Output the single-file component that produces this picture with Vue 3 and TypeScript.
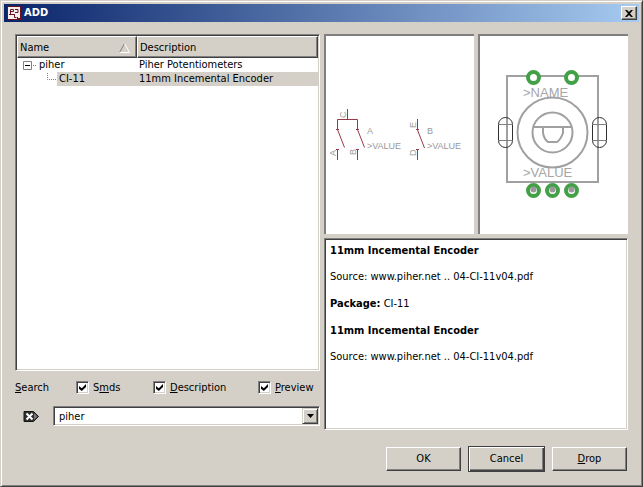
<script setup lang="ts">
import { ref } from 'vue'

interface TreeRow {
  name: string
  description: string
  child: boolean
}

interface Pin {
  label: string
  x: number
  y: number
}

interface Filter {
  before: string
  key: string
  after: string
  on: boolean
}

const rows: TreeRow[] = [
  { name: 'piher', description: 'Piher Potentiometers', child: false },
  { name: 'CI-11', description: '11mm Incemental Encoder', child: true },
]

const pins: Pin[] = [
  { label: 'A', x: 336, y: 156 },
  { label: 'B', x: 356, y: 155 },
  { label: 'C', x: 346, y: 118 },
  { label: 'D', x: 416, y: 156 },
  { label: 'E', x: 416, y: 128 },
]

const openPads: number[] = [533.5, 571.5]
const drilledPads: number[] = [533.5, 552.5, 571.5]
const holders: number[] = [498.5, 592.5]

const filters = ref<Filter[]>([
  { before: 'S', key: 'm', after: 'ds', on: true },
  { before: '', key: 'D', after: 'escription', on: true },
  { before: '', key: 'P', after: 'review', on: true },
])
const query = ref<string>('piher')
const selected = ref<string>('CI-11')
</script>

<template>
  <main class="dialog">
    <header class="titlebar">
      <svg class="logo" viewBox="0 0 14 14" aria-hidden="true">
        <rect width="14" height="14" fill="#6b1420" />
        <rect x="1" y="1" width="12" height="12" fill="#f6eeee" />
        <path d="M3.500 8V3.500H6.500V5.500H4M8 3.500h3v3H8M2 8.500h6M7.500 8.500v3h2" fill="none" stroke="#6b1420" />
        <path d="M10 11h4v3h-4z" fill="#6b1420" />
        <path d="M11 11.500h2" stroke="#f6eeee" />
      </svg>
      <h1>ADD</h1>
      <button class="close" type="button" aria-label="Close">
        <svg viewBox="0 0 8 7" aria-hidden="true"><path d="M0 0h2l2 2 2-2h2L5 3.500 8 7H6L4 5 2 7H0l3-3.500z" /></svg>
      </button>
    </header>

    <div class="content">
      <section class="browser">
        <div class="tree sunken">
          <table>
            <thead>
              <tr>
                <th class="name-col">
                  <span class="head">Name
                    <svg class="sort" viewBox="0 0 11 10" aria-hidden="true">
                      <path d="M5.500 .5L.5 9.500" stroke="#808080" />
                      <path d="M5.500 .5l5 9H.5" fill="none" stroke="#fff" />
                    </svg>
                  </span>
                </th>
                <th>Description</th>
              </tr>
            </thead>
            <tbody>
              <tr v-for="row in rows" :key="row.name" @click="selected = row.name">
                <td class="node">
                  <span class="cell">
                    <svg v-if="!row.child" class="branch" viewBox="0 0 20 14" aria-hidden="true">
                      <path d="M6.500 3.500h8v8h-8z" fill="#fff" stroke="#808080" />
                      <path d="M8 7.500h5" stroke="#000" />
                      <path d="M16 7.500h4" stroke="#808080" stroke-dasharray="1 1" />
                    </svg>
                    <svg v-else class="branch deep" viewBox="0 0 40 14" aria-hidden="true">
                      <path d="M30.500 1v6.500H40" fill="none" stroke="#808080" stroke-dasharray="1 1" />
                    </svg>
                    <span class="label" :class="{ selected: selected === row.name }">{{ row.name }}</span>
                  </span>
                </td>
                <td :class="{ selected: selected === row.name }">{{ row.description }}</td>
              </tr>
            </tbody>
          </table>
        </div>

        <div class="filters">
          <label for="query"><u>S</u>earch</label>
          <label v-for="item in filters" :key="item.key" class="check">
            <input v-model="item.on" type="checkbox" />
            <span>{{ item.before }}<u>{{ item.key }}</u>{{ item.after }}</span>
          </label>
        </div>

        <div class="search">
          <button class="clear" type="button" aria-label="Clear search" @click="query = ''">
            <svg viewBox="0 0 16 11" aria-hidden="true">
              <path d="M1 .5h9.500l5 5-5 5H1z" fill="#303030" stroke="#151515" />
              <path d="M11 2l3.500 3.500L11 9z" fill="#777" />
              <path d="M3.500 2.500l6 6M9.500 2.500l-6 6" stroke="#fff" stroke-width="2" />
            </svg>
          </button>
          <div class="combo sunken">
            <input id="query" v-model="query" type="text" />
            <button type="button" aria-label="Search history">
              <svg viewBox="0 0 7 4" aria-hidden="true"><path d="M0 0h7L3.500 4z" /></svg>
            </button>
          </div>
        </div>
      </section>

      <section class="details">
        <div class="previews">
          <div class="preview">
            <svg viewBox="326 36 148 198" role="img" aria-label="Symbol">
              <g class="symbol-text">
                <text v-for="pin in pins" :key="pin.label" :transform="`translate(${pin.x} ${pin.y}) rotate(-90)`">{{ pin.label }}</text>
                <text x="367" y="134">A</text>
                <text x="367" y="149">&gt;VALUE</text>
                <text x="427" y="134">B</text>
                <text x="427" y="149">&gt;VALUE</text>
              </g>
              <g class="wire">
                <path d="M337.500 130v-10.500h20V130M347.500 109v10.500M337.500 129.500l7 18M357.500 129.500l7 18M337.500 149v11M357.500 149v11M417.500 119v11l7 18M417.500 149v11" />
                <path d="M336 129.500h3M356 129.500h3M416 129.500h3M336 149.500h3M356 149.500h3M416 149.500h3" />
              </g>
            </svg>
          </div>
          <div class="preview">
            <svg viewBox="480 36 148 198" role="img" aria-label="Package">
              <g class="outline">
                <rect x="507" y="76" width="91" height="106" />
                <circle cx="552.500" cy="132.500" r="35" />
                <circle cx="552.500" cy="132.500" r="20" />
                <path d="M533 127h39M543 127v6q1 6 5 9h9q4-3 6-9v-6" />
              </g>
              <g class="package-text">
                <text x="523" y="97">&gt;NAME</text>
                <text x="523" y="177">&gt;VALUE</text>
              </g>
              <g v-for="x in holders" :key="x" class="holder">
                <rect :x="x" y="117.500" width="14" height="30" rx="7" />
                <path :d="`M${x} 124.500h14M${x} 140.500h14`" />
              </g>
              <circle v-for="x in openPads" :key="`o${x}`" class="pad" :cx="x" cy="77.500" r="5.500" />
              <g v-for="x in drilledPads" :key="`d${x}`">
                <circle class="pad" :cx="x" cy="190.500" r="5.500" />
                <circle :cx="x" cy="189.500" r="3" fill="#999" />
              </g>
            </svg>
          </div>
        </div>

        <article class="info sunken">
          <h2>11mm Incemental Encoder</h2>
          <p>Source: www.piher.net .. 04-CI-11v04.pdf</p>
          <p><b>Package:</b> CI-11</p>
          <h2>11mm Incemental Encoder</h2>
          <p>Source: www.piher.net .. 04-CI-11v04.pdf</p>
        </article>
      </section>
    </div>

    <footer class="actions">
      <button type="button">OK</button>
      <button type="button" class="default">Cancel</button>
      <button type="button"><u>D</u>rop</button>
    </footer>
  </main>
</template>

<style>
body {
  margin: 0;
  background: #d4d0c8;
}
</style>

<style scoped>
* {
  box-sizing: border-box;
}

.dialog {
  display: flex;
  flex-direction: column;
  min-height: 100vh;
  padding: 2px;
  border: 1px solid;
  border-color: #d4d0c8 #404040 #404040 #d4d0c8;
  box-shadow: inset 1px 1px #fff, inset -1px -1px #808080;
  background: #d4d0c8;
  color: #000;
  font: 11px/14px "DejaVu Sans Condensed", "DejaVu Sans", sans-serif;
}

button,
input {
  margin: 0;
  padding: 0;
  font: inherit;
  color: inherit;
}

svg {
  display: block;
}

.titlebar {
  display: flex;
  align-items: center;
  height: 18px;
  margin: 1px;
  padding: 0 2px 0 3px;
  background: linear-gradient(90deg, #0a246a, #a6caf0);
}

.logo {
  width: 14px;
  height: 14px;
}

h1 {
  flex: 1;
  margin: 0 0 0 3px;
  color: #fff;
  font-size: 11px;
  line-height: 14px;
}

.close {
  display: grid;
  place-items: center;
  width: 16px;
  height: 14px;
  border: 1px solid;
  border-color: #fff #404040 #404040 #fff;
  background: #d4d0c8;
  box-shadow: inset -1px -1px #808080;
}

.close svg {
  width: 8px;
  height: 7px;
}

.content {
  display: grid;
  flex: 1;
  grid-template-columns: 305fr 304fr;
  gap: 4px;
  padding: 11px 12px 0;
}

.browser,
.details {
  display: flex;
  flex-direction: column;
  min-width: 0;
}

.details {
  gap: 4px;
}

.sunken {
  border: 1px solid;
  border-color: #808080 #fff #fff #808080;
  background: #fff;
  box-shadow: inset 1px 1px #404040, inset -1px -1px #d4d0c8;
}

.tree {
  flex: 1;
  padding: 1px;
}

table {
  width: 100%;
  border-collapse: separate;
  border-spacing: 0;
  table-layout: fixed;
}

th {
  height: 22px;
  padding: 1px 2px 0;
  border: 1px solid;
  border-color: #fff #404040 #404040 #fff;
  background: #d4d0c8;
  box-shadow: inset -1px -1px #808080;
  font-weight: normal;
  text-align: left;
}

.name-col {
  width: 120px;
}

.head {
  display: flex;
  align-items: center;
  justify-content: space-between;
  padding-right: 4px;
}

.sort {
  width: 11px;
  height: 10px;
}

td {
  height: 14px;
  padding: 0 2px;
}

.node {
  padding: 0;
}

.cell {
  display: flex;
}

.branch {
  flex: none;
  width: 20px;
  height: 14px;
}

.branch.deep {
  width: 40px;
}

.label {
  flex: 1;
  padding-left: 2px;
}

.selected {
  background: #d4d0c8;
}

.filters {
  display: grid;
  grid-template-columns: 61fr 77fr 105fr 62fr;
  align-items: center;
  height: 35px;
  padding-bottom: 2px;
}

.check {
  display: flex;
  align-items: center;
  gap: 4px;
}

.check input {
  appearance: none;
  display: grid;
  place-items: center;
  width: 13px;
  height: 13px;
  border: 1px solid;
  border-color: #808080 #fff #fff #808080;
  background: #fff;
  box-shadow: inset 1px 1px #404040, inset -1px -1px #d4d0c8;
}

.check input:checked::before {
  width: 7px;
  height: 7px;
  background: #000;
  clip-path: polygon(0 28%, 40% 62%, 100% 0, 100% 42%, 40% 100%, 0 68%);
  content: "";
}

.search {
  display: flex;
  align-items: center;
  gap: 14px;
  margin-bottom: 4px;
  padding-left: 8px;
}

.clear {
  border: 0;
  background: none;
}

.clear svg {
  width: 16px;
  height: 11px;
}

.combo {
  display: flex;
  flex: 1;
  height: 20px;
  padding: 1px;
}

.combo input {
  flex: 1;
  min-width: 0;
  padding: 1px 0 0 4px;
  border: 0;
  outline: 0;
  background: none;
}

.combo button {
  display: grid;
  place-items: center;
  width: 16px;
  border: 1px solid;
  border-color: #d4d0c8 #404040 #404040 #d4d0c8;
  background: #d4d0c8;
  box-shadow: inset 1px 1px #fff, inset -1px -1px #808080;
}

.combo svg {
  width: 7px;
  height: 4px;
}

.previews {
  display: grid;
  grid-template-columns: 1fr 1fr;
  gap: 4px;
}

.preview {
  border-top: 2px solid #808080;
  border-left: 2px solid #808080;
  background: #fff;
}

.preview svg {
  width: 100%;
}

.wire {
  fill: none;
  stroke: #983848;
}

.symbol-text,
.package-text {
  fill: #999;
  font-family: "Liberation Sans", sans-serif;
  font-size: 9px;
}

.package-text {
  fill: #a6a6a6;
  font-size: 13px;
}

.outline {
  fill: none;
  stroke: #a0a0a0;
  stroke-width: 2;
}

.holder {
  fill: none;
  stroke: #303030;
}

.holder path {
  stroke: #808080;
}

.pad {
  fill: #fff;
  stroke: #43a047;
  stroke-width: 4;
}

.info {
  flex: 1;
  padding: 5px;
}

.info h2,
.info p {
  margin: 0 0 13px;
  font-size: 11px;
  line-height: 14px;
}

.info h2 {
  margin-bottom: 12px;
}

.actions {
  display: flex;
  align-items: center;
  justify-content: flex-end;
  gap: 7px;
  padding: 16px 13px 12px;
}

.actions button {
  width: 75px;
  height: 24px;
  border: 1px solid;
  border-color: #fff #404040 #404040 #fff;
  background: #d4d0c8;
  box-shadow: inset -1px -1px #808080;
}

.actions .default {
  width: 77px;
  height: 26px;
  border-color: #404040;
  box-shadow: inset 1px 1px #fff, inset -1px -1px #404040, inset -2px -2px #808080;
}
</style>
